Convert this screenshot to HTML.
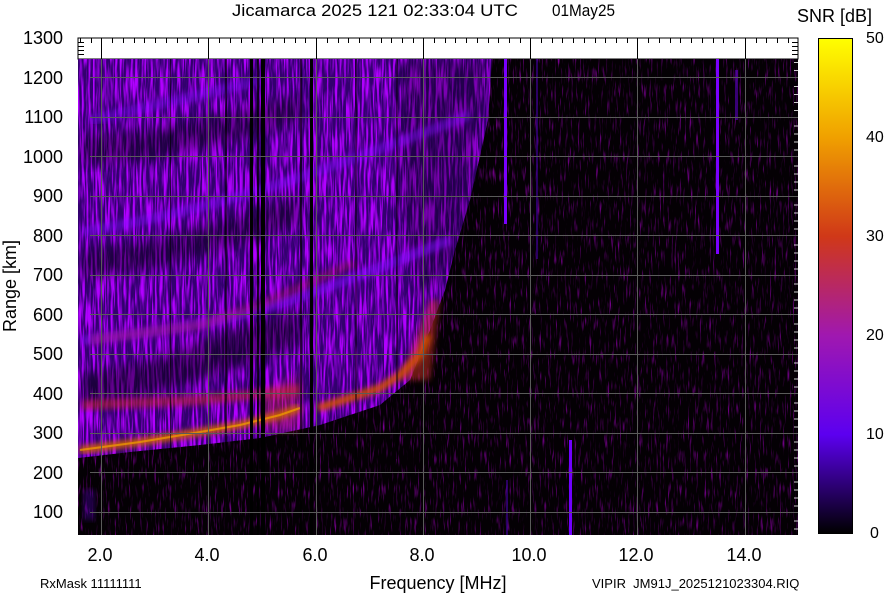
<!DOCTYPE html>
<html><head><meta charset="utf-8"><style>
html,body{margin:0;padding:0;background:#fff;}
svg{display:block;}
text{font-family:"Liberation Sans",Arial,sans-serif;fill:#000;}
</style></head><body>
<svg width="884" height="595" viewBox="0 0 884 595" xmlns="http://www.w3.org/2000/svg">
<defs>
<filter id="n" x="0" y="0" width="100%" height="100%">
<feTurbulence type="fractalNoise" baseFrequency="0.45 0.03" numOctaves="2" seed="4" result="t"/>
<feColorMatrix in="t" type="matrix" values="0 0 0 0 0.44  0 0 0 0 0  0 0 0 0 1  0 0 0 4 -1.7" result="c"/>
<feComposite in="c" in2="SourceGraphic" operator="in"/>
</filter>
<filter id="n2" x="0" y="0" width="100%" height="100%">
<feTurbulence type="fractalNoise" baseFrequency="0.6 0.06" numOctaves="2" seed="9" result="t"/>
<feColorMatrix in="t" type="matrix" values="0 0 0 0 0.22  0 0 0 0 0  0 0 0 0 0.32  0 0 0 3 -1.7" result="c"/>
<feComposite in="c" in2="SourceGraphic" operator="in"/>
</filter>
<filter id="b3"><feGaussianBlur stdDeviation="3"/></filter>
<filter id="b6"><feGaussianBlur stdDeviation="6"/></filter>
<linearGradient id="cb" x1="0" y1="0" x2="0" y2="1">
<stop offset="0" stop-color="#ffff00"/>
<stop offset="0.2" stop-color="#f0a000"/>
<stop offset="0.4" stop-color="#d03818"/>
<stop offset="0.6" stop-color="#a018b0"/>
<stop offset="0.8" stop-color="#5c00f0"/>
<stop offset="1" stop-color="#000000"/>
</linearGradient>
<clipPath id="pa"><rect x="78" y="59" width="720" height="476"/></clipPath>
</defs>

<text x="232" y="16" font-size="17" textLength="286" lengthAdjust="spacingAndGlyphs">Jicamarca 2025 121 02:33:04 UTC</text>
<text x="552" y="16" font-size="17" textLength="63" lengthAdjust="spacingAndGlyphs">01May25</text>
<text x="797" y="22" font-size="18">SNR [dB]</text>

<rect x="78" y="38" width="720" height="21" fill="#fff" stroke="#000" stroke-width="1"/>
<g clip-path="url(#pa)">
<rect x="78" y="59" width="720" height="476" fill="#040004"/>
<rect x="78" y="59" width="720" height="476" fill="#fff" filter="url(#n2)"/>
<path d="M78 59 L492 59 L488 120 L470 200 L455 250 L445 290 L430 330 L410 380 L380 405 L320 425 L260 438 L200 445 L130 452 L78 458 Z" fill="#6a00f0" opacity="0.45"/>
<path d="M78 59 L492 59 L488 120 L470 200 L455 250 L445 290 L430 330 L410 380 L380 405 L320 425 L260 438 L200 445 L130 452 L78 458 Z" fill="#fff" filter="url(#n)"/>
<path d="M82 375 L150 360 L230 330 L300 310 L300 345 L230 370 L150 395 L82 405 Z" fill="#000" opacity="0.45" filter="url(#b6)"/>
<path d="M82 250 L150 240 L240 215 L300 195 L300 225 L240 245 L150 270 L82 280 Z" fill="#000" opacity="0.4" filter="url(#b6)"/>
<path d="M82 135 L150 130 L240 110 L300 95 L300 120 L240 140 L150 160 L82 165 Z" fill="#000" opacity="0.4" filter="url(#b6)"/>
<path d="M400 59 L490 59 L470 200 L455 260 L420 300 L400 200 Z" fill="#000" opacity="0.3" filter="url(#b6)"/>
<path d="M82 340 Q180 330 240 315 T450 240" stroke="#8010ff" stroke-width="10" fill="none" opacity="0.55" filter="url(#b3)"/>
<path d="M82 232 Q180 215 260 190 T470 115" stroke="#8010ff" stroke-width="10" fill="none" opacity="0.45" filter="url(#b3)"/>
<path d="M90 120 Q180 100 260 80" stroke="#8010ff" stroke-width="10" fill="none" opacity="0.4" filter="url(#b3)"/>
<path d="M82 410 L200 405 L300 395 L300 385 L200 395 L82 400 Z" fill="#d02a20" opacity="0.5" filter="url(#b3)"/>
<path d="M262 395 L300 375 L300 430 L262 430 Z" fill="#c82a30" opacity="0.4" filter="url(#b6)"/>
<path d="M400 380 L430 300 L440 300 L430 380 Z" fill="#d03020" opacity="0.5" filter="url(#b3)"/>
<path d="M90 335 L200 320 L260 300 L350 260 L360 265 L260 310 L200 330 L90 345 Z" fill="#c02040" opacity="0.3" filter="url(#b3)"/>
<path d="M80 450 L140 442 L200 432 L240 425 L280 415 L300 408" stroke="#d06000" stroke-width="7" fill="none" filter="url(#b3)"/>
<path d="M80 450 L140 442 L200 432 L240 425 L280 415 L300 408" stroke="#f0a000" stroke-width="2" fill="none" opacity="0.7"/>
<path d="M318 408 L350 398 L380 388 L400 375 L420 355 L428 335" stroke="#d05000" stroke-width="7" fill="none" filter="url(#b3)"/>
<rect x="250" y="59" width="3" height="476" fill="#000"/>
<rect x="257" y="59" width="2" height="476" fill="#000" opacity="0.8"/>
<rect x="261" y="59" width="4" height="476" fill="#000"/>
<rect x="300" y="59" width="2" height="476" fill="#000" opacity="0.7"/>
<rect x="310" y="59" width="3" height="476" fill="#000"/>
<rect x="225" y="59" width="2" height="400" fill="#000" opacity="0.6"/>
<rect x="170" y="59" width="1" height="400" fill="#000" opacity="0.6"/>
<rect x="355" y="59" width="2" height="400" fill="#000" opacity="0.5"/>
<rect x="396" y="59" width="2" height="400" fill="#000" opacity="0.5"/>
<rect x="504" y="59" width="3" height="165" fill="#7a00ff"/>
<rect x="716" y="59" width="3" height="195" fill="#7a00ff"/>
<rect x="569" y="440" width="3" height="95" fill="#7000ff"/>
<rect x="536" y="59" width="2" height="200" fill="#5000c0" opacity="0.5"/>
<rect x="735" y="70" width="3" height="50" fill="#5a00c0" opacity="0.6"/>
<rect x="506" y="480" width="2" height="55" fill="#5000c0" opacity="0.5"/>
<rect x="83" y="490" width="12" height="30" fill="#6000e0" opacity="0.3" filter="url(#b3)"/>
<g stroke="#5a5a5a" stroke-width="1">
<line x1="101.5" y1="59" x2="101.5" y2="535"/>
<line x1="208.5" y1="59" x2="208.5" y2="535"/>
<line x1="316.5" y1="59" x2="316.5" y2="535"/>
<line x1="423.5" y1="59" x2="423.5" y2="535"/>
<line x1="530.5" y1="59" x2="530.5" y2="535"/>
<line x1="637.5" y1="59" x2="637.5" y2="535"/>
<line x1="745.5" y1="59" x2="745.5" y2="535"/>
<line x1="90" y1="77.5" x2="798" y2="77.5"/>
<line x1="90" y1="117.5" x2="798" y2="117.5"/>
<line x1="90" y1="156.5" x2="798" y2="156.5"/>
<line x1="90" y1="196.5" x2="798" y2="196.5"/>
<line x1="90" y1="235.5" x2="798" y2="235.5"/>
<line x1="90" y1="275.5" x2="798" y2="275.5"/>
<line x1="90" y1="314.5" x2="798" y2="314.5"/>
<line x1="90" y1="354.5" x2="798" y2="354.5"/>
<line x1="90" y1="393.5" x2="798" y2="393.5"/>
<line x1="90" y1="433.5" x2="798" y2="433.5"/>
<line x1="90" y1="472.5" x2="798" y2="472.5"/>
<line x1="90" y1="512.5" x2="798" y2="512.5"/>
</g>
</g>
<g stroke="#000" stroke-width="1">
<line x1="101.5" y1="38" x2="101.5" y2="59"/><line x1="208.5" y1="38" x2="208.5" y2="59"/>
<line x1="316.5" y1="38" x2="316.5" y2="59"/><line x1="423.5" y1="38" x2="423.5" y2="59"/>
<line x1="530.5" y1="38" x2="530.5" y2="59"/><line x1="637.5" y1="38" x2="637.5" y2="59"/>
<line x1="745.5" y1="38" x2="745.5" y2="59"/>
<path d="M80.5 38v5M91.5 38v5M112.5 38v5M123.5 38v5M134.5 38v5M144.5 38v5M155.5 38v5M166.5 38v5M177.5 38v5M187.5 38v5M198.5 38v5M219.5 38v5M230.5 38v5M241.5 38v5M252.5 38v5M262.5 38v5M273.5 38v5M284.5 38v5M295.5 38v5M305.5 38v5M327.5 38v5M338.5 38v5M348.5 38v5M359.5 38v5M370.5 38v5M381.5 38v5M391.5 38v5M402.5 38v5M413.5 38v5M434.5 38v5M445.5 38v5M455.5 38v5M466.5 38v5M477.5 38v5M488.5 38v5M498.5 38v5M509.5 38v5M520.5 38v5M541.5 38v5M552.5 38v5M562.5 38v5M573.5 38v5M584.5 38v5M595.5 38v5M605.5 38v5M616.5 38v5M627.5 38v5M648.5 38v5M659.5 38v5M670.5 38v5M680.5 38v5M691.5 38v5M702.5 38v5M713.5 38v5M723.5 38v5M734.5 38v5M756.5 38v5M766.5 38v5M777.5 38v5M788.5 38v5"/>
<path d="M78 42.5h6M78 46.5h6M78 50.5h6M78 54.5h6M792 42.5h6M792 46.5h6M792 50.5h6M792 54.5h6"/>
</g>
<g stroke="#fff" stroke-width="1" opacity="0.8">
<path d="M794 62.5h4M794 70.5h4M794 86.5h4M794 94.5h4M794 102.5h4M794 110.5h4M794 126h4M794 134h4M794 142h4M794 150h4M794 166h4M794 174h4M794 182h4M794 190h4M794 205h4M794 213h4M794 221h4M794 229h4M794 245h4M794 253h4M794 261h4M794 269h4M794 284h4M794 292h4M794 300h4M794 308h4M794 324h4M794 332h4M794 340h4M794 348h4M794 363h4M794 371h4M794 379h4M794 387h4M794 403h4M794 411h4M794 419h4M794 427h4M794 442h4M794 450h4M794 458h4M794 466h4M794 482h4M794 490h4M794 498h4M794 506h4M794 521h4M794 529h4"/>
</g>

<g font-size="18" text-anchor="end">
<text x="63" y="44">1300</text><text x="63" y="84">1200</text><text x="63" y="123">1100</text>
<text x="63" y="163">1000</text><text x="63" y="202">900</text><text x="63" y="242">800</text>
<text x="63" y="281">700</text><text x="63" y="321">600</text><text x="63" y="360">500</text>
<text x="63" y="400">400</text><text x="63" y="439">300</text><text x="63" y="479">200</text>
<text x="63" y="518">100</text>
</g>
<text transform="translate(16 286) rotate(-90)" font-size="18" text-anchor="middle">Range [km]</text>
<g font-size="18" text-anchor="middle">
<text x="100" y="561">2.0</text><text x="207" y="561">4.0</text><text x="315" y="561">6.0</text>
<text x="422" y="561">8.0</text><text x="529" y="561">10.0</text><text x="636" y="561">12.0</text>
<text x="744" y="561">14.0</text>
</g>
<text x="438" y="589" font-size="18" text-anchor="middle">Frequency [MHz]</text>
<text x="40" y="588" font-size="13">RxMask 11111111</text>
<text x="592" y="588" font-size="13">VIPIR&#160; JM91J_2025121023304.RIQ</text>

<rect x="818.5" y="38.5" width="34" height="495" fill="url(#cb)" stroke="#000" stroke-width="1"/>
<g font-size="16">
<text x="866" y="43">50</text><text x="866" y="142">40</text><text x="866" y="241">30</text>
<text x="866" y="340">20</text><text x="866" y="439">10</text><text x="870" y="538">0</text>
</g>
</svg>
</body></html>
